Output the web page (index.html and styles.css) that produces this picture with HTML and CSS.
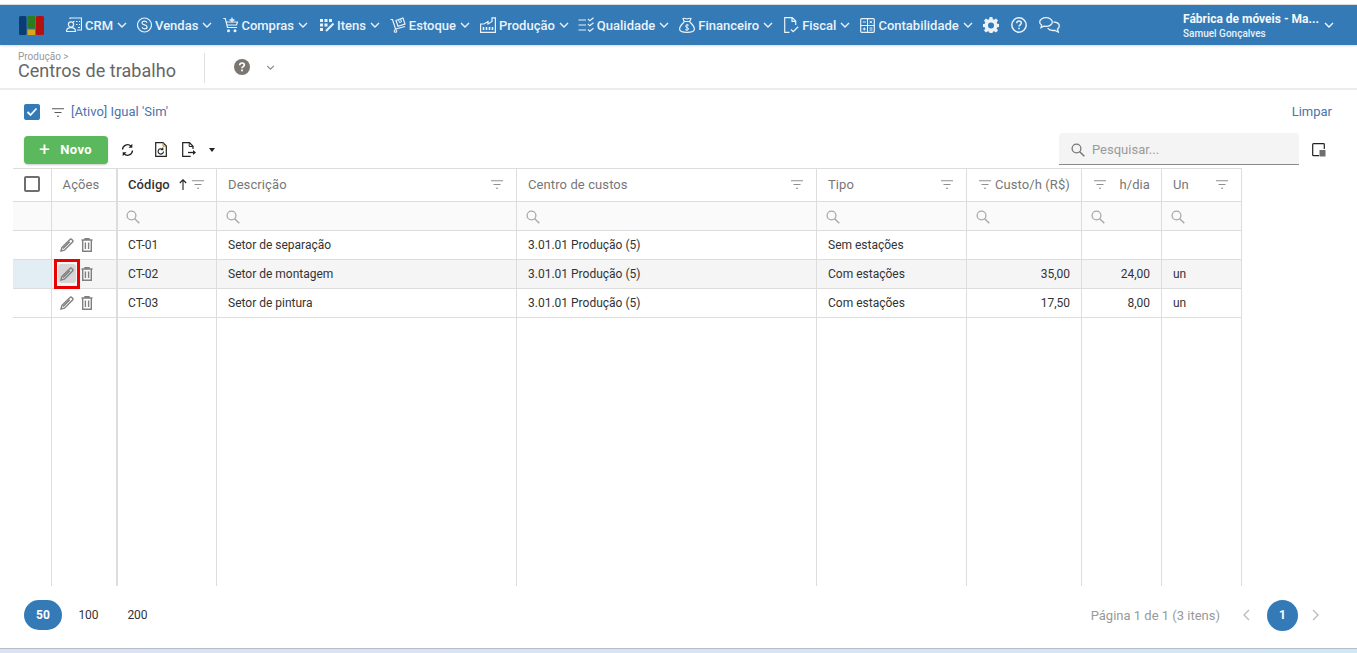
FILE: index.html
```html
<!DOCTYPE html>
<html lang="pt-BR">
<head>
<meta charset="utf-8">
<title>Centros de trabalho</title>
<link rel="stylesheet" href="styles.css">
</head>
<body>
<svg class="defs" width="0" height="0" aria-hidden="true">
  <defs>
    <symbol id="chev" viewBox="0 0 10 6"><path d="M1 1l4 4 4-4" fill="none" stroke="currentColor" stroke-width="1.4"/></symbol>
    <symbol id="funnel" viewBox="0 0 12 9"><path d="M0 .75h12M2.500 4.500h7M5 8.250h2" fill="none" stroke="currentColor" stroke-width="1.100"/></symbol>
    <symbol id="mag" viewBox="0 0 14 14"><circle cx="5.500" cy="5.500" r="4.400" fill="none" stroke="currentColor" stroke-width="1.300"/><path d="M8.700 8.700l4.600 4.600" stroke="currentColor" stroke-width="1.500"/></symbol>
    <symbol id="pencil" viewBox="0 0 14 14"><path d="M1 13l.8-3.400L10 1.400a1.200 1.200 0 0 1 1.700 0l.9.9a1.200 1.200 0 0 1 0 1.700L4.400 12.200z" fill="none" stroke="currentColor" stroke-width="1.400"/><path d="M3 10.500l6.800-6.800" stroke="currentColor" stroke-width="1.600"/></symbol>
    <symbol id="trash" viewBox="0 0 12 14"><path d="M.5 2h11M4 2V.7h4V2M1.700 2v11.300h8.600V2M4.400 4.500v6.500M7.600 4.500v6.500" fill="none" stroke="currentColor" stroke-width="1.400"/></symbol>
  </defs>
</svg>

<header class="topnav">
  <svg class="logo" width="25" height="19" viewBox="0 0 25 19" role="img" aria-label="Logo">
    <rect x="0" y="0" width="7.500" height="19" rx="1.500" fill="#0b3c74"/>
    <rect x="8.500" y="0" width="7.500" height="12.500" fill="#2c7d1f"/>
    <rect x="8.500" y="13.500" width="7.500" height="5.500" fill="#d9a520"/>
    <rect x="17" y="0" width="8" height="19" rx="1.500" fill="#b5120f"/>
  </svg>
  <nav class="menu">
    <a class="menu-item">
      <svg class="mi" width="16" height="16" viewBox="0 0 16 16"><circle cx="5" cy="7.500" r="2.600" fill="none" stroke="currentColor" stroke-width="1.200"/><path d="M.5 14.500c0-3 2-3.800 4.500-3.800s4.500.8 4.500 3.800z" fill="none" stroke="currentColor" stroke-width="1.200"/><path d="M4 2V1h11.500v12H11M7 4.500h1.500M10 4.500h1.500M13 4.500h1M10 7.500h1.500M13 7.500h1M12 10.500h2" fill="none" stroke="currentColor" stroke-width="1.200"/></svg>
      <span>CRM</span><svg class="chev" width="10" height="6"><use href="#chev"/></svg>
    </a>
    <a class="menu-item">
      <svg class="mi" width="15" height="16" viewBox="0 0 15 16"><circle cx="7.500" cy="8" r="7" fill="none" stroke="currentColor" stroke-width="1.200"/><path d="M10 5.700C9.500 4.700 8.500 4.200 7.500 4.200c-1.500 0-2.500.8-2.500 1.900 0 2.500 5.100 1.200 5.100 3.800 0 1.100-1.100 1.900-2.600 1.900-1.100 0-2.100-.5-2.600-1.500" fill="none" stroke="currentColor" stroke-width="1.200"/></svg>
      <span>Vendas</span><svg class="chev" width="10" height="6"><use href="#chev"/></svg>
    </a>
    <a class="menu-item compras">
      <svg class="mi" width="15" height="16" viewBox="0 0 15 16"><path d="M.3 1.500h2l2.200 9h9.500M3 5h11.500l-1 3H4" fill="none" stroke="currentColor" stroke-width="1.200"/><path d="M9 .5v5M6.500 3h5" stroke="currentColor" stroke-width="1.300"/><circle cx="5.500" cy="13.800" r="1.500" fill="currentColor"/><circle cx="12" cy="13.800" r="1.500" fill="currentColor"/></svg>
      <span>Compras</span><svg class="chev" width="10" height="6"><use href="#chev"/></svg>
    </a>
    <a class="menu-item itens">
      <svg class="mi" width="14" height="14" viewBox="0 0 14 14"><g fill="currentColor"><rect x="0" y="1" width="3" height="3"/><rect x="4.500" y="1" width="3" height="3"/><rect x="9" y="1" width="3" height="3"/><rect x="0" y="5.500" width="3" height="3"/><rect x="4.500" y="5.500" width="3" height="3"/><rect x="0" y="10" width="3" height="3"/></g><path d="M6 13l7.500-7.500" stroke="currentColor" stroke-width="2"/></svg>
      <span>Itens</span><svg class="chev" width="10" height="6"><use href="#chev"/></svg>
    </a>
    <a class="menu-item">
      <svg class="mi" width="16" height="16" viewBox="0 0 16 16"><path d="M.5 2.500h2l3 9.500 9.500-2.500" fill="none" stroke="currentColor" stroke-width="1.200"/><circle cx="5.500" cy="14" r="1.300" fill="none" stroke="currentColor" stroke-width="1.100"/><path d="M6 3.500l7-2.500 2 6-7 2.300z" fill="none" stroke="currentColor" stroke-width="1.200"/><path d="M8.500 2.700l1 2.800 2-.7-1-2.800" fill="none" stroke="currentColor" stroke-width="1"/></svg>
      <span>Estoque</span><svg class="chev" width="10" height="6"><use href="#chev"/></svg>
    </a>
    <a class="menu-item tight">
      <svg class="mi" width="16" height="16" viewBox="0 0 16 16"><path d="M.6 15.300V7h3.400l4-2.500V7l4-2.500V.8h3.400v14.500z" fill="none" stroke="currentColor" stroke-width="1.200"/><path d="M3.500 10v3M6.500 10v3M9.500 10v3M12.500 10v3" stroke="currentColor" stroke-width="1.600"/></svg>
      <span>Produção</span><svg class="chev" width="10" height="6"><use href="#chev"/></svg>
    </a>
    <a class="menu-item">
      <svg class="mi" width="16" height="16" viewBox="0 0 16 16"><path d="M.5 3h7.500M.5 8h7.500M.5 13h7.500M10 2l1.800 1.800L15.500.8M10 7l1.800 1.800 3.700-3M10 12.500l1.800 1.800 3.700-3" fill="none" stroke="currentColor" stroke-width="1.200"/></svg>
      <span>Qualidade</span><svg class="chev" width="10" height="6"><use href="#chev"/></svg>
    </a>
    <a class="menu-item wide">
      <svg class="mi" width="16" height="16" viewBox="0 0 16 16"><path d="M5.200 4.500L4 1.500c1.500-.8 2.500.3 4 .3s2.500-1.100 4-.3l-1.200 3zM5.200 4.500h5.600M5.200 5C3 7 .6 9.500.6 12c0 2.500 2.400 3.400 7.400 3.400s7.400-.9 7.400-3.400c0-2.500-2.400-5-4.600-7" fill="none" stroke="currentColor" stroke-width="1.200"/><path d="M9.800 8.300C8.800 7.600 6.600 7.800 6.600 9.200c0 1.800 3 1 3 2.700 0 1.300-2.200 1.500-3.400.7M8 6.800v6.800" fill="none" stroke="currentColor" stroke-width="1"/></svg>
      <span>Financeiro</span><svg class="chev" width="10" height="6"><use href="#chev"/></svg>
    </a>
    <a class="menu-item">
      <svg class="mi" width="15" height="16" viewBox="0 0 15 16"><path d="M5.500 15.400H.7V.6h7.500l3.500 3.500v4M8 .8v3.500h3.500" fill="none" stroke="currentColor" stroke-width="1.200"/><path d="M7 12.500l2.200 2.200 5-5" fill="none" stroke="currentColor" stroke-width="1.300"/></svg>
      <span>Fiscal</span><svg class="chev" width="10" height="6"><use href="#chev"/></svg>
    </a>
    <a class="menu-item">
      <svg class="mi" width="15" height="15" viewBox="0 0 15 15"><rect x=".7" y=".7" width="13.600" height="13.600" rx="1" fill="none" stroke="currentColor" stroke-width="1.200"/><path d="M.7 7.500h13.600M7.500 .7v13.600M2.800 4h3M9.500 2.800l2.500 2.500M12 2.800L9.500 5.300M2.800 11h3M4.300 9.500v3M9.500 10h3M9.500 12h3" fill="none" stroke="currentColor" stroke-width="1"/></svg>
      <span>Contabilidade</span><svg class="chev" width="10" height="6"><use href="#chev"/></svg>
    </a>
    <div class="menu-tools">
      <svg width="16" height="16" viewBox="0 0 16 16"><path fill="currentColor" fill-rule="evenodd" d="M6.600 0h2.800l.4 2.200 1.300.6 1.900-1.300 2 2-1.300 1.900.6 1.300 2.200.4v2.800l-2.200.4-.6 1.300 1.300 1.900-2 2-1.900-1.300-1.300.6-.4 2.200H6.600l-.4-2.200-1.300-.6L3 15.500l-2-2 1.300-1.900-.6-1.300L-.5 9.900V7.100l2.200-.4.600-1.300L1 3.500l2-2 1.900 1.300 1.300-.6zM8 5.500a3 3 0 1 0 0 6 3 3 0 0 0 0-6z"/></svg>
      <svg width="16" height="16" viewBox="0 0 16 16"><circle cx="8" cy="8" r="7.200" fill="none" stroke="currentColor" stroke-width="1.500"/><path d="M5.700 6.200C5.800 4.800 6.800 4 8 4c1.300 0 2.300.8 2.300 2 0 1.800-2.300 1.800-2.300 3.600" fill="none" stroke="currentColor" stroke-width="1.500"/><rect x="7.200" y="10.700" width="1.600" height="1.600" fill="currentColor"/></svg>
      <svg width="21" height="16" viewBox="0 0 21 16"><path d="M7 .7C3.500.7.700 2.600.7 5c0 1.300.8 2.400 2 3.200L2 10.600l3-1.400c.7.100 1.300.2 2 .2 3.500 0 6.300-2 6.300-4.400S10.500.7 7 .7z" fill="none" stroke="currentColor" stroke-width="1.300"/><path d="M14.500 5c3.200.2 5.800 1.800 5.800 4 0 1.200-.7 2.200-1.800 3l.8 3-3.300-1.700c-.7.100-1.300.2-2 .2-2.300 0-4.300-.9-5.400-2.300" fill="none" stroke="currentColor" stroke-width="1.300"/></svg>
    </div>
  </nav>
  <div class="account">
    <div class="account-text">
      <strong>Fábrica de móveis - Ma...</strong>
      <small>Samuel Gonçalves</small>
    </div>
    <svg class="chev-acc" width="10" height="6"><use href="#chev"/></svg>
  </div>
</header>

<section class="subhead">
  <div class="title-block">
    <div class="crumb">Produção &gt;</div>
    <h1>Centros de trabalho</h1>
  </div>
  <div class="title-tools">
    <svg width="16" height="16" viewBox="0 0 16 16"><circle cx="8" cy="8" r="8" fill="#7c7671"/><path d="M5.700 6.200C5.800 4.800 6.800 4 8 4c1.300 0 2.300.8 2.300 2 0 1.600-2.300 1.600-2.300 3.200" fill="none" stroke="#fff" stroke-width="1.700"/><rect x="7.100" y="10.500" width="1.800" height="1.800" fill="#fff"/></svg>
    <svg class="title-chev" width="9" height="5"><use href="#chev"/></svg>
  </div>
</section>

<main class="content">
  <div class="filterbar">
    <span class="check on"><svg width="12" height="10" viewBox="0 0 12 10"><path d="M1.500 5l3 3 6-6.500" fill="none" stroke="#fff" stroke-width="1.800"/></svg></span>
    <svg class="filter-ic" width="12" height="9"><use href="#funnel"/></svg>
    <span class="filter-text">[Ativo] Igual 'Sim'</span>
    <a class="clear">Limpar</a>
  </div>

  <div class="toolbar">
    <button class="btn-new" type="button"><span class="plus">+</span>Novo</button>
    <svg class="tool" width="13" height="14" viewBox="0 0 13 14"><path d="M1.500 6.500A5 5 0 0 1 10 3.200M11.500 7.500A5 5 0 0 1 3 10.800" fill="none" stroke="#222" stroke-width="1.300"/><path d="M11.300 .8v3.900H7.500z" fill="#222"/><path d="M1.700 13.200V9.300h3.800z" fill="#222"/></svg>
    <svg class="tool t2" width="12" height="15" viewBox="0 0 12 15"><path d="M.7.7h7.300l3.300 3.300v10.300H.7z" fill="none" stroke="#222" stroke-width="1.200"/><path d="M8 .8v3.400h3" fill="none" stroke="#b8860b" stroke-width="1"/><path d="M8.500 9.500a2.700 2.700 0 1 1-1-2.200M7.800 5.600v2h-2" fill="none" stroke="#222" stroke-width="1.100"/></svg>
    <svg class="tool t3" width="14" height="15" viewBox="0 0 14 15"><path d="M11 7V4.300L7.500 .7H.7v13.600h8" fill="none" stroke="#222" stroke-width="1.200"/><path d="M7.200 .8v3.700H11" fill="none" stroke="#222" stroke-width="1"/><path d="M6 10.500h5.500" stroke="#222" stroke-width="1.300"/><path d="M11 8l3 2.500-3 2.500z" fill="#222"/></svg>
    <span class="caret"></span>
    <label class="search">
      <svg width="14" height="14"><use href="#mag"/></svg>
      <span>Pesquisar...</span>
    </label>
    <svg class="tool t4" width="14" height="14" viewBox="0 0 14 14"><path d="M7 12.700H1.500a.8.8 0 0 1-.8-.8V1.500a.8.8 0 0 1 .8-.8h10a.8.8 0 0 1 .8.8V6" fill="none" stroke="#222" stroke-width="1.200"/><rect x="7.500" y="7" width="6" height="6.500" fill="#6e6e6e"/></svg>
  </div>

  <div class="grid">
    <div class="row head">
      <div class="cell"><span class="check"></span></div>
      <div class="cell c-actions">Ações</div>
      <div class="cell sorted"><b>Código</b><svg class="sort" width="8" height="11" viewBox="0 0 8 11"><path d="M4 11V1M.8 4L4 .8 7.200 4" fill="none" stroke="#222" stroke-width="1.100"/></svg><svg class="fn" width="12" height="9"><use href="#funnel"/></svg></div>
      <div class="cell between">Descrição<svg class="fn" width="12" height="9"><use href="#funnel"/></svg></div>
      <div class="cell between">Centro de custos<svg class="fn" width="12" height="9"><use href="#funnel"/></svg></div>
      <div class="cell between">Tipo<svg class="fn" width="12" height="9"><use href="#funnel"/></svg></div>
      <div class="cell end g5"><svg class="fn" width="12" height="9"><use href="#funnel"/></svg>Custo/h (R$)</div>
      <div class="cell end g10"><svg class="fn" width="12" height="9"><use href="#funnel"/></svg>h/dia</div>
      <div class="cell between">Un<svg class="fn" width="12" height="9"><use href="#funnel"/></svg></div>
    </div>
    <div class="row search-row">
      <div class="cell"></div>
      <div class="cell"></div>
      <div class="cell"><svg class="mg" width="14" height="14"><use href="#mag"/></svg></div>
      <div class="cell"><svg class="mg" width="14" height="14"><use href="#mag"/></svg></div>
      <div class="cell"><svg class="mg" width="14" height="14"><use href="#mag"/></svg></div>
      <div class="cell"><svg class="mg" width="14" height="14"><use href="#mag"/></svg></div>
      <div class="cell"><svg class="mg" width="14" height="14"><use href="#mag"/></svg></div>
      <div class="cell"><svg class="mg" width="14" height="14"><use href="#mag"/></svg></div>
      <div class="cell"><svg class="mg" width="14" height="14"><use href="#mag"/></svg></div>
    </div>
    <div class="row data">
      <div class="cell"></div>
      <div class="cell acts"><span class="act"><svg width="14" height="14"><use href="#pencil"/></svg></span><span class="act"><svg width="12" height="14"><use href="#trash"/></svg></span></div>
      <div class="cell">CT-01</div>
      <div class="cell">Setor de separação</div>
      <div class="cell">3.01.01 Produção (5)</div>
      <div class="cell">Sem estações</div>
      <div class="cell"></div>
      <div class="cell"></div>
      <div class="cell"></div>
    </div>
    <div class="row data hover">
      <div class="cell sel"></div>
      <div class="cell acts"><span class="act hl"><svg width="14" height="14"><use href="#pencil"/></svg></span><span class="act"><svg width="12" height="14"><use href="#trash"/></svg></span></div>
      <div class="cell">CT-02</div>
      <div class="cell">Setor de montagem</div>
      <div class="cell">3.01.01 Produção (5)</div>
      <div class="cell">Com estações</div>
      <div class="cell right">35,00</div>
      <div class="cell right">24,00</div>
      <div class="cell">un</div>
    </div>
    <div class="row data">
      <div class="cell"></div>
      <div class="cell acts"><span class="act"><svg width="14" height="14"><use href="#pencil"/></svg></span><span class="act"><svg width="12" height="14"><use href="#trash"/></svg></span></div>
      <div class="cell">CT-03</div>
      <div class="cell">Setor de pintura</div>
      <div class="cell">3.01.01 Produção (5)</div>
      <div class="cell">Com estações</div>
      <div class="cell right">17,50</div>
      <div class="cell right">8,00</div>
      <div class="cell">un</div>
    </div>
    <div class="row filler">
      <div class="cell"></div><div class="cell"></div><div class="cell"></div><div class="cell"></div><div class="cell"></div><div class="cell"></div><div class="cell"></div><div class="cell"></div><div class="cell"></div>
    </div>
  </div>

  <footer class="pager">
    <div class="sizes">
      <span class="pill">50</span>
      <span class="size first">100</span>
      <span class="size">200</span>
    </div>
    <div class="pages">
      <span class="info">Página 1 de 1 (3 itens)</span>
      <svg class="arrow" width="8" height="12" viewBox="0 0 8 12"><path d="M7 1L2 6l5 5" fill="none" stroke="currentColor" stroke-width="1.300"/></svg>
      <span class="page-no">1</span>
      <svg class="arrow" width="8" height="12" viewBox="0 0 8 12"><path d="M1 1l5 5-5 5" fill="none" stroke="currentColor" stroke-width="1.300"/></svg>
    </div>
  </footer>
</main>
<div class="desk"></div>
</body>
</html>
```

FILE: styles.css
```css
*, *::before, *::after { box-sizing: border-box; }
html, body { height: 100%; }
body {
  margin: 0;
  height: 653px;
  overflow: hidden;
  display: flex;
  flex-direction: column;
  background: #fff;
  color: #333;
  font-family: Roboto, "Liberation Sans", sans-serif;
  font-size: 12px;
}
.defs { position: absolute; }

.topnav {
  flex: none;
  height: 41px;
  margin-top: 4px;
  border-top: 1px solid #dcdcdc;
  padding: 0 23px 0 19px;
  background: #337ab7;
  color: #eaf2f9;
  display: flex;
  align-items: center;
  box-shadow: 0 1px 2px rgba(0,0,0,.15);
  position: relative;
}
.logo { flex: none; margin-right: 22px; }
.menu { display: flex; align-items: center; gap: 10px; flex: 1; }
.menu-item {
  display: flex;
  align-items: center;
  gap: 3px;
  font-size: 13px;
  font-weight: 500;
  white-space: nowrap;
}
.compras { margin-left: 1px; }
.itens { margin-left: 2px; }
.tight { margin-right: -1px; }
.wide { margin-right: 1px; }
.chev { margin-left: 1px; flex: none; }
.menu-tools { display: flex; align-items: center; gap: 12px; }
.account { display: flex; align-items: center; }
.account-text { width: 141px; display: flex; flex-direction: column; padding-top: 1px; }
.account-text strong { font-size: 12px; font-weight: 700; line-height: 15px; color: #f4f8fb; white-space: nowrap; }
.account-text small { font-size: 10px; font-weight: 500; line-height: 13px; }
.chev-acc { color: #f4f8fb; }

.subhead {
  flex: none;
  height: 45px;
  border-bottom: 2px solid #ececec;
  padding: 6px 18px 0;
  display: flex;
  align-items: flex-start;
}
.title-block { width: 187px; height: 30px; border-right: 1px solid #e0e0e0; margin-top: 2px; }
.crumb { font-size: 10px; line-height: 9px; color: #999; margin-top: -1px; }
h1 { margin: -1px 0 0; font-size: 18px; font-weight: 400; line-height: 22px; color: #666; letter-spacing: .05px; }
.title-tools { display: flex; align-items: center; gap: 16px; margin: 8px 0 0 29px; color: #8a8a8a; }

.content { flex: 1; min-height: 0; display: flex; flex-direction: column; padding: 0 0 0 13px; }

.filterbar {
  flex: none;
  height: 24px;
  margin-top: 10px;
  padding: 0 25px 0 11px;
  display: flex;
  align-items: center;
  color: #5a5a5a;
}
.check {
  width: 16px;
  height: 16px;
  border: 2px solid #6e6e6e;
  border-radius: 2px;
  display: inline-flex;
  align-items: center;
  justify-content: center;
}
.check.on { background: #337ab7; border-color: #337ab7; }
.filter-ic { margin: 0 8px 0 11px; }
.filter-text { color: #4a75ae; font-size: 13px; margin-top: -2px; margin-left: -1px; }
.filter-ic { margin: 0 8px 0 12px; }
.clear { margin-left: auto; color: #4a75ae; font-size: 13px; margin-top: -2px; }

.toolbar {
  flex: none;
  height: 29px;
  margin-top: 11px;
  padding: 0 0 0 11px;
  display: flex;
  align-items: center;
}
.btn-new {
  width: 84px;
  height: 28px;
  border: 0;
  border-radius: 4px;
  background: #5cb85c;
  color: #fff;
  font: 700 13px Roboto, sans-serif;
  letter-spacing: .4px;
  box-shadow: 0 1px 2px rgba(0,0,0,.2);
  display: flex;
  align-items: center;
  justify-content: center;
  margin-right: 13px;
  padding: 0 1px 0 0;
}
.plus { font-size: 19px; font-weight: 400; margin-right: 10px; line-height: 18px; }
.tool { flex: none; }
.t2 { margin-left: 21px; }
.t3 { margin-left: 15px; }
.caret {
  width: 0; height: 0;
  border-left: 3.5px solid transparent;
  border-right: 3.5px solid transparent;
  border-top: 4px solid #222;
  margin-left: 13px;
}
.search {
  margin-left: auto;
  width: 240px;
  height: 32px;
  margin-top: -1px;
  background: #f4f4f4;
  border-bottom: 1px solid #8a8a8a;
  border-radius: 4px 4px 0 0;
  display: flex;
  align-items: center;
  gap: 7px;
  padding: 2px 0 0 12px;
  color: #9a9a9a;
  font-size: 13px;
}
.search svg { color: #777; }
.t4 { margin: 0 31px 0 13px; }

.grid {
  flex: none;
  width: 1229px;
  height: 418px;
  margin-top: 4px;
  border-top: 1px solid #ddd;
  display: flex;
  flex-direction: column;
}
.row {
  display: grid;
  grid-template-columns: 39px 66px 99px 300px 300px 150px 115px 80px 80px;
  border-bottom: 1px solid #ddd;
}
.cell {
  border-right: 1px solid #ddd;
  padding: 0 11px;
  display: flex;
  align-items: center;
  min-width: 0;
  white-space: nowrap;
}
.cell:first-child { padding: 0 0 0 11px; }
.cell:nth-child(2) { border-right-width: 2px; }
.cell:nth-child(3) { padding-left: 10px; }

.head { height: 33px; color: #777; font-size: 13px; letter-spacing: .1px; }
.head .cell { padding-bottom: 2px; }
.head b { font-weight: 500; color: #333; }
.head .c-actions { justify-content: center; padding: 0 6px 2px 0; }
.between { justify-content: space-between; }
.between .fn { margin-right: 2px; }
.end { justify-content: flex-end; }
.g5 { gap: 4px; }
.g10 { gap: 13px; }
.fn { color: #8f8f8f; flex: none; }
.sort { margin: 0 5px 0 9px; flex: none; }

.search-row { height: 29px; background: #fafafa; }
.search-row .cell { padding: 2px 0 0 9px; }
.search-row .cell:nth-child(3) { padding-left: 8px; }
.mg { color: #aaa; }

.data { height: 29px; font-size: 12px; color: #333; }
.hover { background: #f5f5f5; }
.sel { background: #e3eef4; }
.right { justify-content: flex-end; }
.data .acts { padding: 0 0 0 8px; gap: 7px; }
.act { color: #808080; display: inline-flex; align-items: center; }
.hl { position: relative; z-index: 1; }
.hl::before {
  content: "";
  position: absolute;
  left: -6px;
  top: -8px;
  width: 26px;
  height: 30px;
  border: 3px solid #ea0000;
}
.hl::after {
  content: "";
  position: absolute;
  left: -2px;
  top: -3px;
  width: 18px;
  height: 19px;
  border-radius: 3px;
  background: #d6d6d6;
  z-index: -1;
}

.filler { flex: 1; border-bottom: 0; }

.pager {
  flex: none;
  height: 62px;
  padding: 0 37px 4px 11px;
  display: flex;
  align-items: center;
  justify-content: space-between;
  font-size: 12px;
}
.sizes { display: flex; align-items: center; }
.pill {
  width: 38px;
  height: 30px;
  border-radius: 15px;
  background: #337ab7;
  color: #fff;
  font-weight: 700;
  display: flex;
  align-items: center;
  justify-content: center;
}
.size { width: 49px; text-align: center; color: #333; }
.first { margin-left: 2px; }
.pages { display: flex; align-items: center; color: #999; }
.info { margin-right: 22px; font-size: 13px; }
.arrow { color: #bbb; }
.page-no {
  width: 31px;
  height: 31px;
  border-radius: 50%;
  background: #337ab7;
  color: #fff;
  font-weight: 700;
  display: flex;
  align-items: center;
  justify-content: center;
  margin: 0 14px 0 17px;
}
.desk {
  flex: none;
  height: 5px;
  border-top: 1px solid #b8bcc8;
  background: linear-gradient(90deg, #dbe2f0, #cfe8f3);
}
```
